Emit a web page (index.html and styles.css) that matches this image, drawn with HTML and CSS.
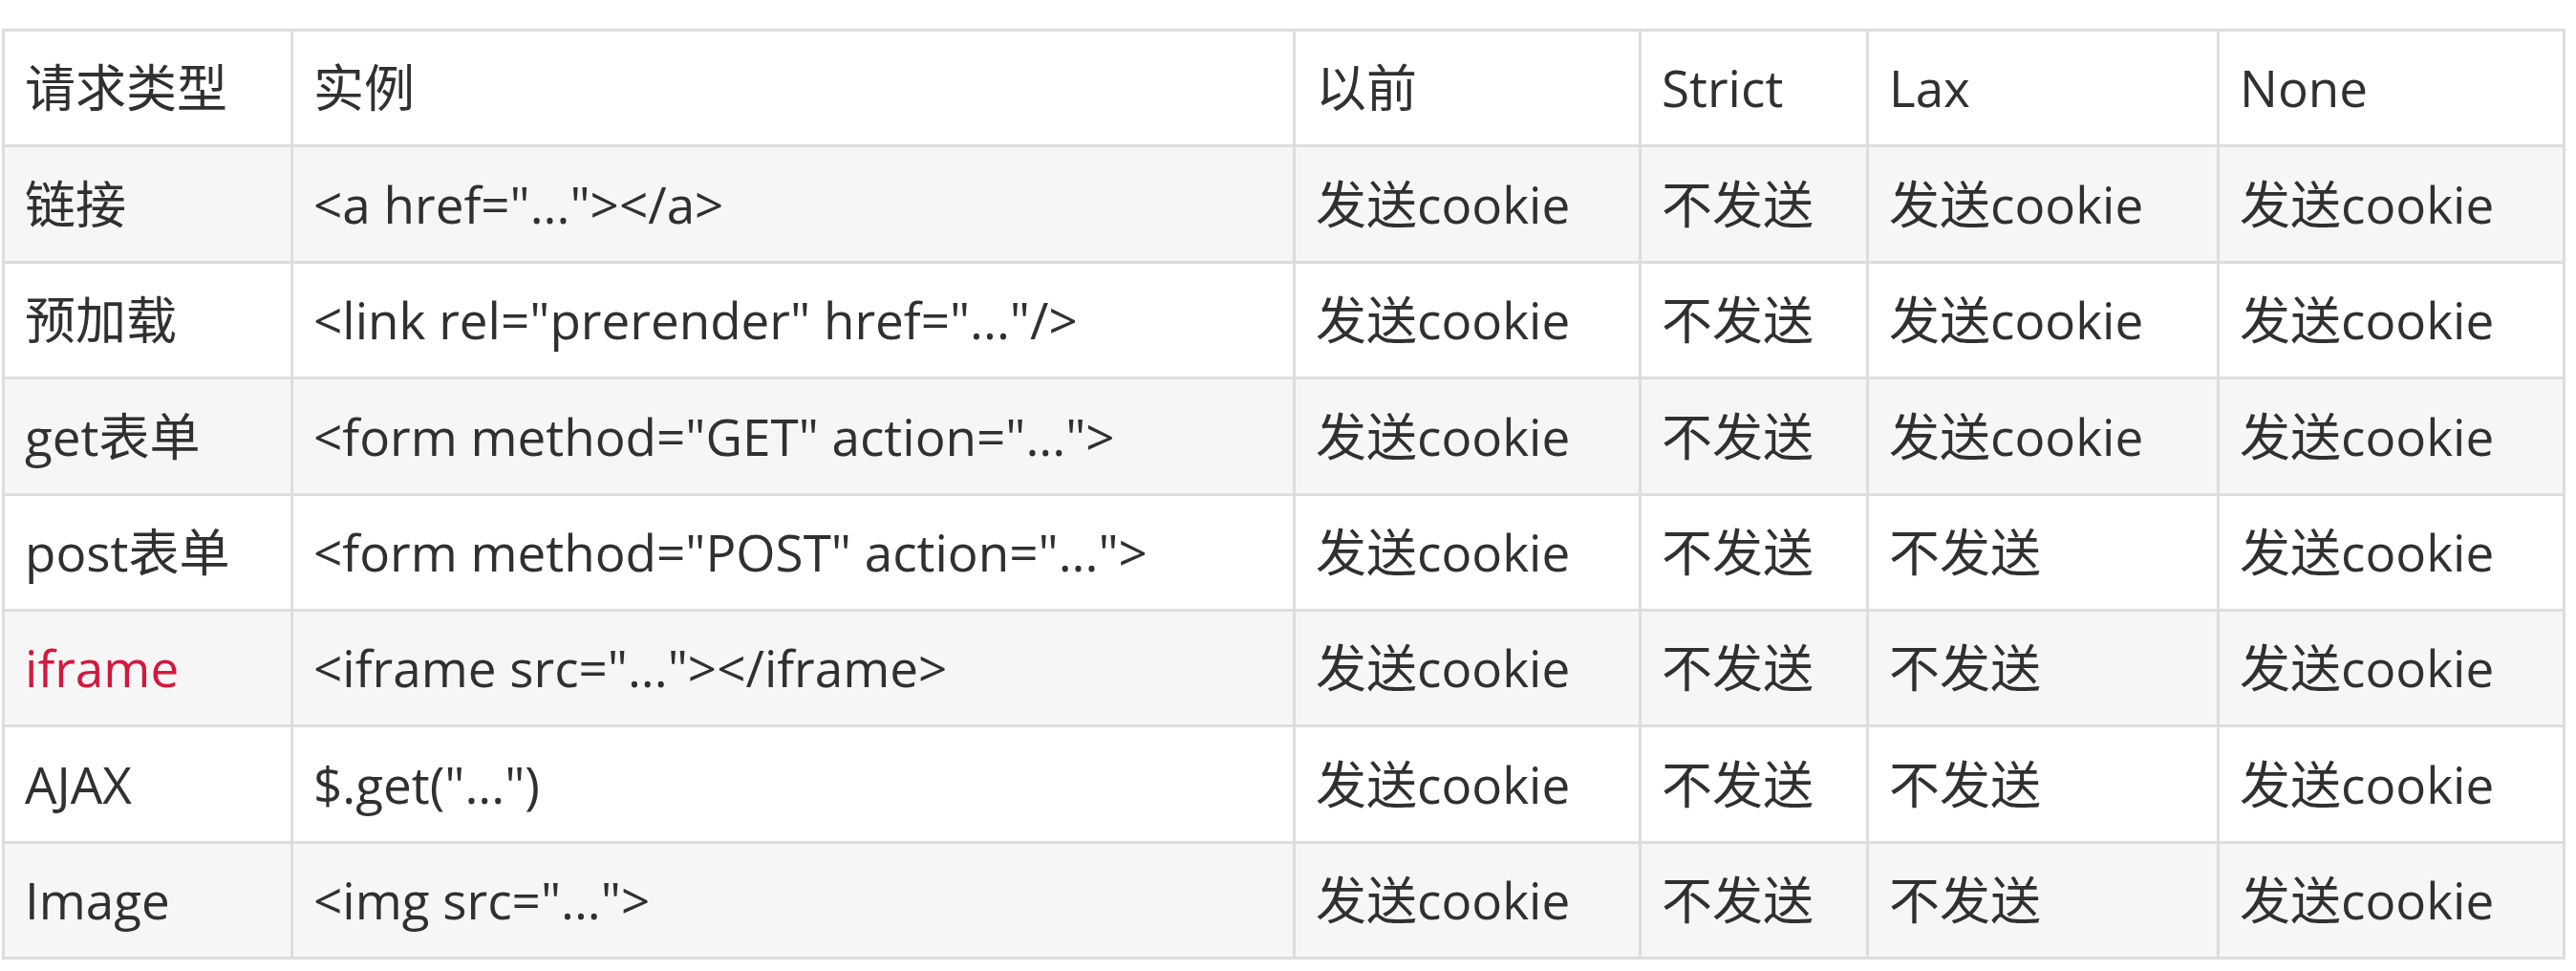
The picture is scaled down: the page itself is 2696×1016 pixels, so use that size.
FILE: index.html
```html
<!DOCTYPE html>
<html lang="zh-CN">
<head>
<meta charset="utf-8">
<title>SameSite</title>
<link rel="stylesheet" href="styles.css">
</head>
<body>
<table class="grid">
  <colgroup>
    <col class="c1"><col class="c2"><col class="c3"><col class="c4"><col class="c5"><col class="c6">
  </colgroup>
  <thead>
    <tr><th>请求类型</th><th>实例</th><th>以前</th><th>Strict</th><th>Lax</th><th>None</th></tr>
  </thead>
  <tbody>
    <tr><td>链接</td><td>&lt;a href="..."&gt;&lt;/a&gt;</td><td>发送cookie</td><td>不发送</td><td>发送cookie</td><td>发送cookie</td></tr>
    <tr><td>预加载</td><td>&lt;link rel="prerender" href="..."/&gt;</td><td>发送cookie</td><td>不发送</td><td>发送cookie</td><td>发送cookie</td></tr>
    <tr><td>get表单</td><td>&lt;form method="GET" action="..."&gt;</td><td>发送cookie</td><td>不发送</td><td>发送cookie</td><td>发送cookie</td></tr>
    <tr><td>post表单</td><td>&lt;form method="POST" action="..."&gt;</td><td>发送cookie</td><td>不发送</td><td>不发送</td><td>发送cookie</td></tr>
    <tr><td class="hl">iframe</td><td>&lt;iframe src="..."&gt;&lt;/iframe&gt;</td><td>发送cookie</td><td>不发送</td><td>不发送</td><td>发送cookie</td></tr>
    <tr><td>AJAX</td><td>$.get("...")</td><td>发送cookie</td><td>不发送</td><td>不发送</td><td>发送cookie</td></tr>
    <tr><td>Image</td><td>&lt;img src="..."&gt;</td><td>发送cookie</td><td>不发送</td><td>不发送</td><td>发送cookie</td></tr>
  </tbody>
</table>
</body>
</html>
```
FILE: styles.css
```css
html, body {
  margin: 0;
  padding: 0;
  background: #ffffff;
}
body {
  padding: 30px 0 0 2px;
  font-family: "Open Sans", "Noto Sans CJK SC", sans-serif;
  color: #303030;
}
.grid {
  table-layout: fixed;
  border-collapse: separate;
  border-spacing: 0;
  width: 2683px;
  border-top: 3px solid #dddddd;
  border-left: 3px solid #dddddd;
  font-size: 53px;
}
.c1 { width: 302px; }
.c2 { width: 1049px; }
.c3 { width: 362px; }
.c4 { width: 238px; }
.c5 { width: 367px; }
.c6 { width: 362px; }
.grid th,
.grid td {
  box-sizing: border-box;
  height: 121.4px;
  padding: 0 0 0 21px;
  border-right: 3px solid #dddddd;
  border-bottom: 3px solid #dddddd;
  text-align: left;
  vertical-align: middle;
  font-weight: 400;
  white-space: nowrap;
  overflow: hidden;
  line-height: 1.2;
}
.grid tbody tr:nth-child(odd) {
  background: #f6f6f7;
}
.grid .hl {
  color: #d4183d;
}
```
